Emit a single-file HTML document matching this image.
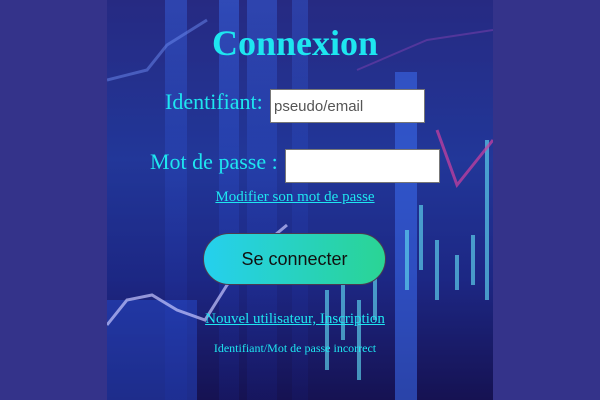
<!DOCTYPE html>
<html><head><meta charset="utf-8"><style>
html,body{margin:0;padding:0;width:600px;height:400px;overflow:hidden;background:#34338a;}
#panel{position:absolute;left:107px;top:0;width:386px;height:400px;overflow:hidden;
background:linear-gradient(180deg,#2a2f8a 0%,#2440a8 40%,#1d2b8c 70%,#140f4a 100%);}
svg{position:absolute;left:0;top:0}
.t{position:absolute;font-family:"Liberation Serif",serif;color:#1ee6f0;white-space:nowrap}
input{position:absolute;border:1px solid #777;background:#fff;box-sizing:border-box;font-family:"Liberation Sans",sans-serif;font-size:15px;color:#555;padding:0 3px;margin:0}
a{color:#1ee6f0}
</style></head><body>
<div id="panel">
<svg width="386" height="400">
<defs><linearGradient id="v" x1="0" y1="0" x2="0" y2="1"><stop offset="0" stop-color="#3a6cf0" stop-opacity=".8"/><stop offset="1" stop-color="#1a2aa0" stop-opacity=".3"/></linearGradient></defs>
<rect x="0" y="0" width="386" height="400" fill="#1d1a6a" opacity=".25"/>
<rect x="58" y="0" width="22" height="400" fill="url(#v)" opacity=".5"/>
<rect x="112" y="0" width="20" height="400" fill="url(#v)" opacity=".6"/>
<rect x="140" y="0" width="30" height="400" fill="url(#v)" opacity=".5"/>
<rect x="185" y="0" width="16" height="400" fill="url(#v)" opacity=".4"/>
<rect x="288" y="72" width="22" height="330" fill="#3d6ef0" opacity=".55"/>
<rect x="0" y="300" width="90" height="100" fill="#2a55e0" opacity=".4"/>
<g stroke="#5fd8f0" stroke-width="4" opacity=".65">
<line x1="220" y1="290" x2="220" y2="370"/><line x1="236" y1="280" x2="236" y2="340"/><line x1="252" y1="300" x2="252" y2="380"/>
<line x1="268" y1="260" x2="268" y2="320"/><line x1="300" y1="230" x2="300" y2="290"/><line x1="314" y1="205" x2="314" y2="270"/>
<line x1="330" y1="240" x2="330" y2="300"/><line x1="350" y1="255" x2="350" y2="290"/><line x1="366" y1="235" x2="366" y2="285"/><line x1="380" y1="140" x2="380" y2="300"/>
</g>
<polyline points="0,325 20,300 45,295 70,310 98,320 120,285 150,250 180,225" fill="none" stroke="#c8c8ff" stroke-width="3" opacity=".7"/>
<polyline points="0,80 40,70 60,45 100,20" fill="none" stroke="#6b8af0" stroke-width="3" opacity=".5"/>
<polyline points="330,130 350,185 370,160 386,140" fill="none" stroke="#d040a0" stroke-width="3" opacity=".7"/>
<polyline points="250,70 320,40 386,30" fill="none" stroke="#8040b0" stroke-width="2" opacity=".5"/>
</svg>
</div>
<div class="t" style="left:0;width:590px;text-align:center;top:22px;font-size:36px;font-weight:bold">Connexion</div>
<div class="t" style="left:165px;top:89px;font-size:22px">Identifiant:</div>
<input style="left:270px;top:89px;width:155px;height:34px" value="pseudo/email">
<div class="t" style="left:150px;top:149px;font-size:22px">Mot de passe :</div>
<input style="left:285px;top:149px;width:155px;height:34px" value="">
<div class="t" style="left:0;width:590px;text-align:center;top:189px;font-size:15px"><a href="#">Modifier son mot de passe</a></div>
<div style="position:absolute;left:203px;top:233px;width:183px;height:52px;box-sizing:border-box;border:1px solid #4a3a50;border-radius:26px;background:linear-gradient(90deg,#25d0ee,#2ad494);font-family:'Liberation Sans',sans-serif;font-size:18px;color:#111;text-align:center;line-height:50px">Se connecter</div>
<div class="t" style="left:0;width:590px;text-align:center;top:311px;font-size:15px"><a href="#">Nouvel utilisateur, Inscription</a></div>
<div class="t" style="left:0;width:590px;text-align:center;top:341px;font-size:12px">Identifiant/Mot de passe incorrect</div>
</body></html>
